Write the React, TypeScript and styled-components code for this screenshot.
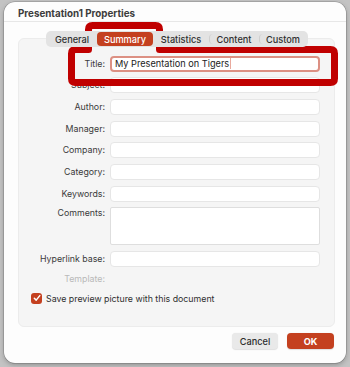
import styled, { createGlobalStyle } from 'styled-components';

const GlobalStyle = createGlobalStyle`
  html, body {
    margin: 0;
    padding: 0;
  }
  body {
    width: 350px;
    height: 367px;
    overflow: hidden;
    background: #c3c3c3;
    font-family: Inter, "Noto Sans", "Liberation Sans", sans-serif;
    -webkit-font-smoothing: antialiased;
  }
`;

const Stage = styled.div`
  position: relative;
  width: 350px;
  height: 367px;
  padding: 2px 4px 0 4px;
  box-sizing: border-box;
`;

const Window = styled.div`
  width: 342px;
  height: 361px;
  background: #fdfdfd;
  border-radius: 11px;
  box-shadow: 0 0 0 0.5px rgba(0, 0, 0, 0.25), 0 2px 5px rgba(0, 0, 0, 0.25);
  display: flex;
  flex-direction: column;
`;

const TitleBar = styled.div`
  height: 20px;
  box-sizing: border-box;
  padding: 6px 0 0 14px;
  border-bottom: 1px solid #e7e7e7;
  font-size: 9.8px;
  font-weight: 700;
  color: #3c3c3c;
  line-height: 12px;
`;

const Body = styled.div`
  padding: 9px 11px 0 14px;
  display: flex;
  flex-direction: column;
`;

const TabBar = styled.div`
  position: relative;
  z-index: 1;
  align-self: center;
  display: flex;
  height: 16px;
  padding: 1px;
  box-sizing: border-box;
  background: #e3e3e3;
  border-radius: 5px;
  margin-bottom: -9px;
`;

const Tab = styled.div<{ $w: number; $active?: boolean; $divider?: boolean }>`
  width: ${(p) => p.$w}px;
  display: flex;
  align-items: center;
  justify-content: center;
  font-size: 9.2px;
  font-weight: 500;
  border-radius: 4px;
  color: ${(p) => (p.$active ? '#fff' : '#303030')};
  background: ${(p) => (p.$active ? '#c4401f' : 'transparent')};
  border-left: 1px solid ${(p) => (p.$divider ? '#cfcfcf' : 'transparent')};
  margin: ${(p) => (p.$divider ? '2px 0' : '0')};
`;

const Panel = styled.div`
  height: 289px;
  box-sizing: border-box;
  background: #f5f5f5;
  border: 1px solid #ececec;
  border-radius: 6px;
  padding: 16.7px 0 0 0;
`;

const Form = styled.div`
  display: grid;
  grid-template-columns: 86px 210px;
  column-gap: 5px;
  row-gap: 5.67px;
  align-items: center;
`;

const Label = styled.div<{ $disabled?: boolean; $top?: boolean }>`
  text-align: right;
  font-size: 8.8px;
  line-height: ${(p) => (p.$disabled ? '12px' : '16px')};
  color: ${(p) => (p.$disabled ? '#b9b9b9' : '#3a3a3a')};
  align-self: ${(p) => (p.$top ? 'start' : 'center')};
  margin-top: ${(p) => (p.$top ? '-2px' : '0')};
`;

const Field = styled.div<{ $tall?: boolean; $focused?: boolean }>`
  height: ${(p) => (p.$tall ? '38px' : '16px')};
  box-sizing: border-box;
  background: #fff;
  border-radius: ${(p) => (p.$tall ? '2px' : '4px')};
  border: ${(p) =>
    p.$focused ? '2px solid #dc9083' : p.$tall ? '1px solid #dedede' : '0.5px solid #e6e6e6'};
  display: flex;
  align-items: center;
  padding-left: ${(p) => (p.$focused ? '3px' : '5px')};
  font-size: 9.2px;
  color: #222;
`;

const Caret = styled.span`
  display: inline-block;
  width: 1px;
  height: 11px;
  margin-left: 1px;
  background: #e9a99d;
`;

const CheckRow = styled.div`
  display: flex;
  align-items: center;
  gap: 4px;
  margin: 8px 0 0 12px;
  font-size: 8.8px;
  color: #2f2f2f;
`;

const CheckBox = styled.div`
  width: 11px;
  height: 11px;
  border-radius: 3px;
  background: #c4401f;
  display: flex;
  align-items: center;
  justify-content: center;
`;

const Buttons = styled.div`
  display: flex;
  justify-content: flex-end;
  gap: 9px;
  margin: 6px 1px 0 0;
`;

const Button = styled.div<{ $primary?: boolean }>`
  width: ${(p) => (p.$primary ? '47px' : '46px')};
  height: 16px;
  border-radius: 4px;
  display: flex;
  align-items: center;
  justify-content: center;
  font-size: 9.2px;
  font-weight: ${(p) => (p.$primary ? 700 : 500)};
  color: ${(p) => (p.$primary ? '#fff' : '#2c2c2c')};
  background: ${(p) => (p.$primary ? '#c4401f' : '#e9e9e9')};
  box-shadow: 0 0.5px 1px rgba(0, 0, 0, 0.12);
`;

const Annotation = styled.svg`
  position: absolute;
  left: 0;
  top: 0;
  pointer-events: none;
`;

const tabs = [
  { name: 'General', w: 49 },
  { name: 'Summary', w: 55 },
  { name: 'Statistics', w: 55 },
  { name: 'Content', w: 49 },
  { name: 'Custom', w: 47 },
];

const fields = ['Subject:', 'Author:', 'Manager:', 'Company:', 'Category:', 'Keywords:'];

export default function App() {
  return (
    <Stage>
      <GlobalStyle />
      <Window>
        <TitleBar>Presentation1 Properties</TitleBar>
        <Body>
          <TabBar>
            {tabs.map((t, i) => (
              <Tab key={t.name} $w={t.w} $active={i === 1} $divider={i > 2}>
                {t.name}
              </Tab>
            ))}
          </TabBar>
          <Panel>
            <Form>
              <Label>Title:</Label>
              <Field $focused>
                My Presentation on Tigers
                <Caret />
              </Field>
              {fields.map((f) => (
                <>
                  <Label key={f}>{f}</Label>
                  <Field key={f + '-in'} />
                </>
              ))}
              <Label $top>Comments:</Label>
              <Field $tall />
              <Label>Hyperlink base:</Label>
              <Field />
              <Label $disabled>Template:</Label>
              <div />
            </Form>
            <CheckRow>
              <CheckBox>
                <svg width="8" height="8" viewBox="0 0 8 8">
                  <path d="M1.3 4.2 L3.2 6.1 L6.8 1.6" fill="none" stroke="#fff" strokeWidth="1.5" strokeLinecap="round" strokeLinejoin="round" />
                </svg>
              </CheckBox>
              Save preview picture with this document
            </CheckRow>
          </Panel>
          <Buttons>
            <Button>Cancel</Button>
            <Button $primary>OK</Button>
          </Buttons>
        </Body>
      </Window>
      <Annotation width="350" height="367" viewBox="0 0 350 367">
        <path
          d="M88.5 49.5 V29.5 Q88.5 25.5 92.5 25.5 H155.5 Q159.5 25.5 159.5 29.5 V49.5 H330.5 Q334.5 49.5 334.5 53.5 V78.5 Q334.5 82.5 330.5 82.5 H75.5 Q71.5 82.5 71.5 78.5 V53.5 Q71.5 49.5 75.5 49.5 Z"
          fill="none"
          stroke="#c00000"
          strokeWidth="7"
          strokeLinejoin="round"
        />
      </Annotation>
    </Stage>
  );
}
